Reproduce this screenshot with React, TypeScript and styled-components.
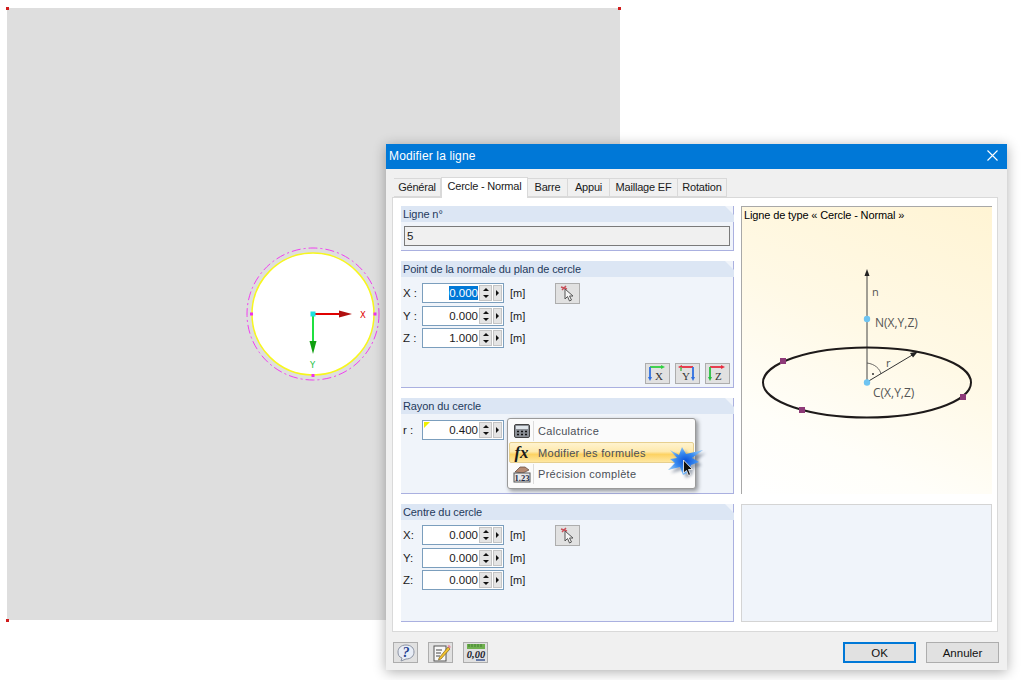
import React from "react";
import styled, { createGlobalStyle } from "styled-components";

const GlobalStyle = createGlobalStyle`
    html, body {
        margin: 0;
        padding: 0;
        background: #ffffff;
    }
    body {
        width: 1021px;
        height: 680px;
        overflow: hidden;
        font-family: "Liberation Sans", Arial, sans-serif;
        font-size: 12px;
        color: #1a1a1a;
    }
`
const Page = styled.div`
    position: relative;
    width: 1021px;
    height: 680px;
    overflow: hidden;
`
const Sheet = styled.div`
    position: absolute;
    left: 7px;
    top: 8px;
    width: 613px;
    height: 612px;
    background: #dedede;
`
const SheetDrawing = styled.svg`
    position: absolute;
    left: 0;
    top: 0;
    overflow: visible;
`
const Dialog = styled.div`
    position: absolute;
    left: 386px;
    top: 144px;
    width: 621px;
    height: 526px;
    background: #f0f0f0;
    box-shadow: 0 2px 12px rgba(0, 0, 0, 0.32);
    display: flex;
    flex-direction: column;
`
const TitleBar = styled.div`
    height: 25px;
    box-sizing: border-box;
    background: #0078d7;
    color: #ffffff;
    font-size: 12px;
    letter-spacing: 0.15px;
    display: flex;
    align-items: center;
    justify-content: space-between;
    padding: 0 9px 2px 3px;
    flex-shrink: 0;
`
const TabRow = styled.div`
    display: flex;
    align-items: flex-end;
    height: 28px;
    padding-left: 8px;
    flex-shrink: 0;
    position: relative;
    z-index: 1;
`
const Tab = styled.div<{ $w: number; $active?: boolean }>`
    width: ${p => p.$w}px;
    height: ${p => (p.$active ? 21 : 19)}px;
    margin-bottom: ${p => (p.$active ? -1 : 0)}px;
    box-sizing: border-box;
    border: 1px solid #d9d9d9;
    border-bottom: ${p => (p.$active ? "none" : "1px solid #d9d9d9")};
    border-left: ${p => (p.$active ? "1px solid #d9d9d9" : "none")};
    background: ${p => (p.$active ? "#ffffff" : "#f0f0f0")};
    display: flex;
    align-items: center;
    justify-content: center;
    padding-bottom: ${p => (p.$active ? 4 : 1)}px;
    font-size: 11px;
    letter-spacing: -0.2px;
    white-space: nowrap;
`
const TabPanel = styled.div`
    width: 606px;
    height: 435px;
    margin-left: 6px;
    box-sizing: border-box;
    background: #ffffff;
    border: 1px solid #d9d9d9;
    padding: 8px 5px 0 8px;
    display: grid;
    grid-template-columns: 333px 251px;
    column-gap: 7px;
    flex-shrink: 0;
`
const Column = styled.div`
    display: flex;
    flex-direction: column;
    gap: 10px;
`
const GroupBox = styled.div<{ $h: number }>`
    position: relative;
    height: ${p => p.$h}px;
    box-sizing: border-box;
    background: #f0f4fa;
    border-right: 1px solid #aab0e0;
    border-bottom: 1px solid #aab0e0;
    display: flex;
    flex-direction: column;
`
const GroupHeader = styled.div`
    height: 16px;
    margin-right: -1px;
    background: #dce6f4;
    clip-path: polygon(0 0, calc(100% - 9px) 0, 100% 9px, 100% 100%, 0 100%);
    color: #1f3a5c;
    font-size: 11px;
    line-height: 16px;
    padding-left: 2px;
    letter-spacing: -0.1px;
    flex-shrink: 0;
`
const ReadOnlyField = styled.div`
    margin: 4px 3px 0 3px;
    height: 20px;
    box-sizing: border-box;
    border: 1px solid #7a7a7a;
    background: #f0f0f0;
    line-height: 18px;
    padding-left: 2px;
    font-size: 11.5px;
`
const FieldStack = styled.div<{ $top?: number }>`
    display: flex;
    flex-direction: column;
    gap: 2.5px;
    padding: ${p => p.$top ?? 6}px 0 0 2px;
`
const FieldRow = styled.div`
    display: flex;
    align-items: center;
    height: 20px;
`
const FieldLabel = styled.span`
    width: 19px;
    font-size: 11.5px;
`
const NumberBox = styled.div`
    position: relative;
    width: 82px;
    height: 20px;
    box-sizing: border-box;
    border: 1px solid #7b9ebd;
    background: #ffffff;
    display: flex;
    align-items: center;
    justify-content: flex-end;
`
const NumberText = styled.span<{ $selected?: boolean }>`
    margin-right: 1px;
    line-height: 14px;
    font-size: 11.5px;
    background: ${p => (p.$selected ? "#0078d7" : "transparent")};
    color: ${p => (p.$selected ? "#ffffff" : "#1a1a1a")};
`
const Corner = styled.span`
    position: absolute;
    left: 1px;
    top: 1px;
    width: 0;
    height: 0;
    border-top: 6px solid #f0f000;
    border-right: 6px solid transparent;
`
const Spinner = styled.span`
    width: 13px;
    height: 16px;
    margin-right: 1px;
    background: #e4e4e4;
    border: 1px solid #c4c4c4;
    box-sizing: border-box;
    display: flex;
    flex-direction: column;
    align-items: center;
    justify-content: space-around;
    flex-shrink: 0;
`
const SpinUp = styled.i`
    width: 0;
    height: 0;
    border: 3px solid transparent;
    border-top: none;
    border-bottom: 3px solid #111111;
`
const SpinDown = styled(SpinUp)`
    border-bottom: none;
    border-top: 3px solid #111111;
`
const SideArrow = styled.span`
    width: 9px;
    height: 16px;
    margin-right: 1px;
    background: #e4e4e4;
    border: 1px solid #c4c4c4;
    box-sizing: border-box;
    display: flex;
    align-items: center;
    justify-content: center;
    flex-shrink: 0;
    &::after {
        content: "";
        border: 3px solid transparent;
        border-right: none;
        border-left: 3px solid #111111;
    }
`
const Unit = styled.span`
    margin-left: 6px;
    font-size: 11px;
`
const IconButton = styled.button<{ $w?: number }>`
    width: ${p => p.$w ?? 25}px;
    height: 21px;
    padding: 0;
    box-sizing: border-box;
    border: 1px solid #adadad;
    background: #e1e1e1;
    display: flex;
    align-items: center;
    justify-content: center;
    flex-shrink: 0;
`
const PickSlot = styled.div`
    margin-left: 30px;
`
const AxisButtons = styled.div`
    position: absolute;
    right: 3px;
    bottom: 3px;
    display: flex;
    gap: 5px;
`
const PreviewBox = styled.div`
    position: relative;
    height: 288px;
    box-sizing: border-box;
    border-top: 1px solid #a8a8a8;
    border-left: 1px solid #a8a8a8;
    background: linear-gradient(205deg, #fff4d4 0%, #fff9e6 45%, #fffef9 78%, #ffffff 100%);
`
const PreviewTitle = styled.div`
    position: absolute;
    left: 2px;
    top: 2px;
    font-size: 11px;
    letter-spacing: -0.13px;
    color: #000000;
`
const PreviewDrawing = styled.svg`
    display: block;
`
const EmptyBox = styled.div`
    height: 118px;
    box-sizing: border-box;
    background: #f0f4fa;
    border: 1px solid #d4d4d4;
`
const Footer = styled.div`
    flex: 1;
    display: flex;
    align-items: flex-start;
    justify-content: space-between;
    padding: 10px 8px 0 7px;
`
const FooterTools = styled.div`
    display: flex;
    gap: 10px;
`
const FooterActions = styled.div`
    display: flex;
    gap: 10px;
`
const ActionButton = styled.button<{ $primary?: boolean }>`
    width: 73px;
    height: 21px;
    box-sizing: border-box;
    padding: 0;
    background: #e1e1e1;
    border: ${p => (p.$primary ? "2px solid #0078d7" : "1px solid #adadad")};
    font-family: "Liberation Sans", Arial, sans-serif;
    font-size: 11.5px;
    color: #111111;
`
const ContextMenu = styled.div`
    position: absolute;
    left: 507px;
    top: 418px;
    width: 189px;
    height: 71px;
    box-sizing: border-box;
    padding: 1px 1px 3px 1px;
    background: #fbfbfb;
    border: 1px solid #9a9a9a;
    border-radius: 3px;
    box-shadow: 2px 2px 4px rgba(0, 0, 0, 0.4);
    display: flex;
    flex-direction: column;
    justify-content: center;
`
const MenuItem = styled.div<{ $hover?: boolean }>`
    height: ${p => (p.$hover ? 21 : 22)}px;
    box-sizing: border-box;
    display: flex;
    align-items: center;
    border-radius: 2px;
    border: 1px solid ${p => (p.$hover ? "#e6cf8f" : "transparent")};
    background: ${p =>
        p.$hover ? "linear-gradient(#fff3cf 0%, #fee9ad 45%, #fdd262 60%, #fee7a2 100%)" : "none"};
`
const MenuIcon = styled.span`
    width: 23px;
    height: 100%;
    display: flex;
    align-items: center;
    justify-content: center;
    flex-shrink: 0;
`
const MenuLabel = styled.span`
    padding-left: 4px;
    height: 100%;
    display: flex;
    align-items: center;
    font-size: 11px;
    letter-spacing: 0.3px;
    color: #4a4f57;
    border-left: 1px solid #dcdcdc;
`
const HoverLabel = styled(MenuLabel)`
    border-left-color: transparent;
`
const FxGlyph = styled.span`
    font-family: "Liberation Serif", serif;
    font-style: italic;
    font-weight: 700;
    font-size: 17px;
    color: #1a1a1a;
`
const Burst = styled.svg`
    position: absolute;
    left: 668px;
    top: 447px;
    overflow: visible;
`

const PickIcon = () => (
    <svg width="17" height="17" viewBox="0 0 17 17">
        <path d="M2 2 L8 4 M7 1 L3 5" stroke="#c8505a" strokeWidth="1.5" />
        <path d="M6 4 L6 14 L8.5 11.5 L10.5 16 L12.5 15 L10.5 11 L14 11 Z" fill="#f4f4f4" stroke="#555" strokeWidth="1" />
    </svg>
)
const AxisIcon = ({ top, left, right, label, flip }: { top: string; left: string; right?: string; label: string; flip?: boolean }) => (
    <svg width="21" height="17" viewBox="0 0 21 17">
        <path d={flip ? "M4 2 H16" : "M3 2 H15"} stroke={top} strokeWidth="1.8" />
        <path d={flip ? "M1 2 L5 0 V4 Z" : "M18 2 L14 0 V4 Z"} fill={top} />
        {!flip && <path d="M3 2 V13" stroke={left} strokeWidth="1.8" />}
        {!flip && <path d="M3 16 L1 12 H5 Z" fill={left} />}
        {flip && <path d="M4 2 V6" stroke={left} strokeWidth="1.6" />}
        {right && <path d="M16 2 V13" stroke={right} strokeWidth="1.8" />}
        {right && <path d="M16 16 L14 12 H18 Z" fill={right} />}
        <text x={flip ? 5 : 8} y="15" fontFamily="Liberation Serif, serif" fontSize="11" fill="#333">{label}</text>
    </svg>
)
const HelpIcon = () => (
    <svg width="20" height="18" viewBox="0 0 20 18">
        <path d="M10 1 C15 1 18 4 18 8 C18 12 15 15 10 15 L5 17 L6 14 C3 13 2 11 2 8 C2 4 5 1 10 1 Z" fill="#e8edf6" stroke="#8c93a3" />
        <text x="10" y="13" textAnchor="middle" fontFamily="Liberation Serif, serif" fontWeight="700" fontStyle="italic" fontSize="14" fill="#23408f">?</text>
    </svg>
)
const NoteIcon = () => (
    <svg width="20" height="18" viewBox="0 0 20 18">
        <rect x="3" y="2" width="12" height="15" fill="#f8f8f8" stroke="#555" />
        <path d="M5 6 H11 M5 9 H10 M5 12 H9" stroke="#444" />
        <path d="M8 14 L17 3 L19 5 L10 15 L7.5 16 Z" fill="#f2c230" stroke="#6a5210" strokeWidth="0.6" />
        <path d="M16.5 2 L18 0.8 L19.8 3 L18.5 4.5 Z" fill="#e88aa0" />
    </svg>
)
const DecimalsIcon = () => (
    <svg width="20" height="18" viewBox="0 0 20 18">
        <rect x="1" y="0" width="18" height="5" fill="#6fb04e" />
        <path d="M3 0 V3 M6 0 V3 M9 0 V3 M12 0 V3 M15 0 V3" stroke="#2f6a2a" strokeWidth="0.7" />
        <text x="10" y="14" textAnchor="middle" fontFamily="Liberation Serif, serif" fontStyle="italic" fontWeight="700" fontSize="10.5" fill="#1c1c2c">0,00</text>
        <path d="M10 16 H19" stroke="#34508f" strokeWidth="1.4" />
    </svg>
)
const CalculatorIcon = () => (
    <svg width="16" height="14" viewBox="0 0 16 14">
        <rect x="0.5" y="0.5" width="15" height="13" rx="1.5" fill="#8b8f96" stroke="#444" />
        <rect x="2" y="2" width="12" height="3" fill="#dfe5ea" />
        <path d="M3 7.5 H5 M7 7.5 H9 M11 7.5 H13 M3 10.5 H5 M7 10.5 H9 M11 10.5 H13" stroke="#111" strokeWidth="1.6" />
    </svg>
)
const PrecisionIcon = () => (
    <svg width="18" height="18" viewBox="0 0 18 18">
        <path d="M2 7 L7 2 L12 2 L16 5 L10 8 Z" fill="#b58a72" stroke="#5b4438" strokeWidth="0.7" />
        <rect x="1" y="8" width="16" height="9" fill="#e9e9e9" stroke="#555" />
        <text x="9" y="15.5" textAnchor="middle" fontFamily="Liberation Serif, serif" fontWeight="700" fontSize="8.5" fill="#1f2a44">1.23</text>
    </svg>
)
const CloseIcon = () => (
    <svg width="11" height="11" viewBox="0 0 11 11">
        <path d="M0.5 0.5 L10.5 10.5 M10.5 0.5 L0.5 10.5" stroke="#ffffff" strokeWidth="1.1" />
    </svg>
)

const NumberField = ({ label, value, selected }: { label: string; value: string; selected?: boolean }) => (
    <FieldRow>
        <FieldLabel>{label}</FieldLabel>
        <NumberBox>
            <NumberText $selected={selected}>{value}</NumberText>
            <Spinner><SpinUp /><SpinDown /></Spinner>
            <SideArrow />
        </NumberBox>
        <Unit>[m]</Unit>
    </FieldRow>
)

const Drawing = () => (
    <SheetDrawing width="613" height="612" viewBox="0 0 613 612">
        <rect x="-1" y="-1" width="3" height="3" fill="#d01c1c" />
        <rect x="611" y="-1" width="3" height="3" fill="#d01c1c" />
        <rect x="-1" y="611" width="3" height="3" fill="#d01c1c" />
        <circle cx="306" cy="306" r="61" fill="#ffffff" stroke="#f7f71e" strokeWidth="1.5" />
        <circle cx="306" cy="306" r="66" fill="none" stroke="#f040f0" strokeWidth="1" strokeDasharray="9 3 2 3" />
        <rect x="243" y="304.5" width="3" height="3" fill="#ee30ee" />
        <rect x="366.5" y="304.5" width="3" height="3" fill="#ee30ee" />
        <rect x="304.5" y="366" width="3" height="3" fill="#ee30ee" />
        <path d="M306 306 H332" stroke="#e00000" strokeWidth="2" />
        <path d="M345 306 L332 302.5 V309.5 Z" fill="#b01010" />
        <path d="M306 306 V333" stroke="#20e040" strokeWidth="2" />
        <path d="M306 346 L302.5 333 H309.5 Z" fill="#10a010" />
        <rect x="303.5" y="303.5" width="5" height="5" fill="#20e0e0" />
        <text x="353" y="310" fontFamily="DejaVu Sans, sans-serif" fontSize="8.5" fill="#e00000">X</text>
        <text x="303" y="360" fontFamily="DejaVu Sans, sans-serif" fontSize="8.5" fill="#20c040">Y</text>
    </SheetDrawing>
)

const CircleDiagram = () => (
    <PreviewDrawing width="250" height="287" viewBox="0 0 250 287">
        <path d="M125 175 V66" stroke="#444444" strokeWidth="1" />
        <path d="M125 62 L122.5 69 H127.5 Z" fill="#222222" />
        <ellipse cx="125" cy="175.5" rx="104" ry="35" fill="none" stroke="#1e1a1a" strokeWidth="2" />
        <path d="M125 175 L172 147" stroke="#333333" strokeWidth="1" />
        <path d="M176 144.5 L168 146 L171 150.5 Z" fill="#222222" />
        <path d="M125 156 C 133 157 138 162 139 167" fill="none" stroke="#444444" strokeWidth="0.8" />
        <circle cx="131" cy="167" r="1" fill="#333333" />
        <circle cx="125" cy="112" r="3.2" fill="#6ec4f2" />
        <circle cx="125" cy="175.5" r="3.2" fill="#6ec4f2" />
        <rect x="38" y="151" width="6" height="6" fill="#8e3a78" />
        <rect x="57" y="200" width="6" height="6" fill="#8e3a78" />
        <rect x="218" y="187" width="6" height="6" fill="#8e3a78" />
        <g fontFamily="Open Sans, sans-serif" fontSize="12" fill="#555555">
            <text x="130" y="89" fontSize="11">n</text>
            <text x="133" y="120">N(X,Y,Z)</text>
            <text x="144" y="160" fontSize="11">r</text>
            <text x="131" y="190">C(X,Y,Z)</text>
        </g>
    </PreviewDrawing>
)

const BURST_PATH = "M2 3 L11 8 L14 0 L18 7 L35 3 L24 11 L31 15 L23 18 L21 25 L15 28 L12 20 L0 23 L7 16 L2 12 L9 11 Z";

const BurstCursor = () => (
    <Burst width="36" height="30" viewBox="0 0 36 30">
        <defs>
            <filter id="soft" x="-30%" y="-30%" width="160%" height="160%">
                <feGaussianBlur stdDeviation="1.4" />
            </filter>
            <radialGradient id="burstFill">
                <stop offset="0%" stopColor="#0a50d8" />
                <stop offset="60%" stopColor="#3a8cf0" />
                <stop offset="100%" stopColor="#86c0f6" />
            </radialGradient>
        </defs>
        <path d={BURST_PATH} fill="#5d6a80" opacity="0.55" transform="translate(3 3)" filter="url(#soft)" />
        <path d={BURST_PATH} fill="url(#burstFill)" />
        <path
            d="M15.5 13 L15.5 26 L18.5 23.5 L20.5 28.5 L22.5 27.5 L20.5 22.5 L24.5 22.5 Z"
            fill="#111111"
            stroke="#ffffff"
            strokeWidth="0.8"
        />
    </Burst>
)

export default function App() {
    return (
        <Page>
            <GlobalStyle />
            <Sheet>
                <Drawing />
            </Sheet>
            <Dialog>
                <TitleBar>
                    <span>Modifier la ligne</span>
                    <CloseIcon />
                </TitleBar>
                <TabRow>
                    <Tab $w={47}>Général</Tab>
                    <Tab $w={87} $active>Cercle - Normal</Tab>
                    <Tab $w={40}>Barre</Tab>
                    <Tab $w={42}>Appui</Tab>
                    <Tab $w={68}>Maillage EF</Tab>
                    <Tab $w={49}>Rotation</Tab>
                </TabRow>
                <TabPanel>
                    <Column>
                        <GroupBox $h={45}>
                            <GroupHeader>Ligne n°</GroupHeader>
                            <ReadOnlyField>5</ReadOnlyField>
                        </GroupBox>
                        <GroupBox $h={127}>
                            <GroupHeader>Point de la normale du plan de cercle</GroupHeader>
                            <FieldStack>
                                <FieldRow>
                                    <NumberField label="X :" value="0.000" selected />
                                    <PickSlot><IconButton><PickIcon /></IconButton></PickSlot>
                                </FieldRow>
                                <NumberField label="Y :" value="0.000" />
                                <NumberField label="Z :" value="1.000" />
                            </FieldStack>
                            <AxisButtons>
                                <IconButton><AxisIcon top="#30d040" left="#2f6fe0" label="X" /></IconButton>
                                <IconButton><AxisIcon top="#e82c40" left="#5fc060" right="#2f6fe0" label="Y" flip /></IconButton>
                                <IconButton><AxisIcon top="#e82c40" left="#28c040" label="Z" /></IconButton>
                            </AxisButtons>
                        </GroupBox>
                        <GroupBox $h={96}>
                            <GroupHeader>Rayon du cercle</GroupHeader>
                            <FieldStack>
                                <FieldRow>
                                    <FieldLabel>r :</FieldLabel>
                                    <NumberBox>
                                        <Corner />
                                        <NumberText>0.400</NumberText>
                                        <Spinner><SpinUp /><SpinDown /></Spinner>
                                        <SideArrow />
                                    </NumberBox>
                                </FieldRow>
                            </FieldStack>
                        </GroupBox>
                        <GroupBox $h={118}>
                            <GroupHeader>Centre du cercle</GroupHeader>
                            <FieldStack $top={5}>
                                <FieldRow>
                                    <NumberField label="X:" value="0.000" />
                                    <PickSlot><IconButton><PickIcon /></IconButton></PickSlot>
                                </FieldRow>
                                <NumberField label="Y:" value="0.000" />
                                <NumberField label="Z:" value="0.000" />
                            </FieldStack>
                        </GroupBox>
                    </Column>
                    <Column>
                        <PreviewBox>
                            <CircleDiagram />
                            <PreviewTitle>Ligne de type « Cercle - Normal »</PreviewTitle>
                        </PreviewBox>
                        <EmptyBox />
                    </Column>
                </TabPanel>
                <Footer>
                    <FooterTools>
                        <IconButton><HelpIcon /></IconButton>
                        <IconButton><NoteIcon /></IconButton>
                        <IconButton><DecimalsIcon /></IconButton>
                    </FooterTools>
                    <FooterActions>
                        <ActionButton $primary>OK</ActionButton>
                        <ActionButton>Annuler</ActionButton>
                    </FooterActions>
                </Footer>
            </Dialog>
            <ContextMenu>
                <MenuItem>
                    <MenuIcon><CalculatorIcon /></MenuIcon>
                    <MenuLabel>Calculatrice</MenuLabel>
                </MenuItem>
                <MenuItem $hover>
                    <MenuIcon><FxGlyph>fx</FxGlyph></MenuIcon>
                    <HoverLabel>Modifier les formules</HoverLabel>
                </MenuItem>
                <MenuItem>
                    <MenuIcon><PrecisionIcon /></MenuIcon>
                    <MenuLabel>Précision complète</MenuLabel>
                </MenuItem>
            </ContextMenu>
            <BurstCursor />
        </Page>
    );
}
